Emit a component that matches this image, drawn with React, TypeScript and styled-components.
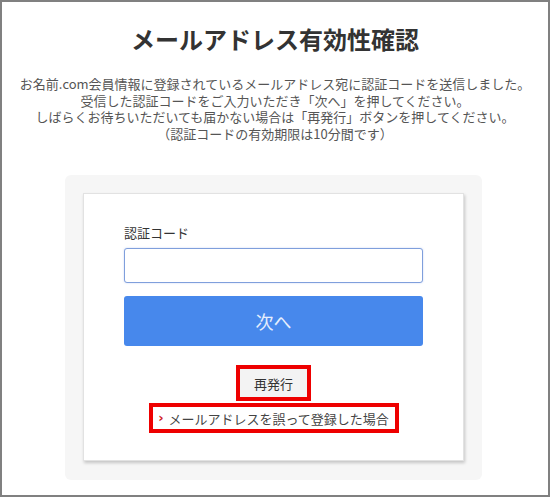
import React from "react";
import styled, { createGlobalStyle } from "styled-components";

const GlobalStyle = createGlobalStyle`
  html, body {
    margin: 0;
    padding: 0;
    background: #fff;
  }
  body {
    font-family: "Noto Sans CJK JP", "Noto Sans", sans-serif;
    color: #333;
  }
`;

const Frame = styled.div`
  box-sizing: border-box;
  width: 550px;
  height: 497px;
  border: 2px solid #808080;
  padding-top: 22px;
  overflow: hidden;
`;

const Title = styled.h1`
  margin: 0;
  font-size: 24px;
  line-height: 30px;
  font-weight: 700;
  text-align: center;
  color: #333;
`;

const Lead = styled.p`
  margin: 22px 0 0;
  font-size: 13px;
  line-height: 16.5px;
  text-align: center;
  color: #555;
`;

const Panel = styled.div`
  box-sizing: border-box;
  width: 417px;
  margin: 33px 0 0 63px;
  padding: 18px 18px 19px;
  background: #f6f6f6;
  border-radius: 6px;
`;

const Card = styled.div`
  box-sizing: border-box;
  height: 268px;
  padding: 30px 40px 0 40px;
  background: #fff;
  border: 1px solid #e2e2e2;
  box-shadow: 1px 2px 3px rgba(0, 0, 0, 0.2);
  display: flex;
  flex-direction: column;
  align-items: stretch;
`;

const Label = styled.label`
  font-size: 13px;
  line-height: 18px;
  color: #333;
`;

const CodeInput = styled.input`
  box-sizing: border-box;
  margin-top: 6px;
  height: 35px;
  width: 100%;
  border: 1px solid #7f9fdc;
  border-radius: 3px;
  box-shadow: 0 0 2px rgba(90, 130, 220, 0.35);
  padding: 0 10px;
  font-size: 14px;
  outline: none;
`;

const NextButton = styled.button`
  margin-top: 13px;
  height: 50px;
  width: 100%;
  border: none;
  border-radius: 3px;
  background: #4788ec;
  color: #e6eefc;
  font-family: inherit;
  font-size: 18px;
  cursor: pointer;
`;

const Actions = styled.div`
  margin-top: 19px;
  display: flex;
  flex-direction: column;
  align-items: center;
  gap: 2px;
`;

const ResendButton = styled.button`
  box-sizing: border-box;
  width: 75px;
  height: 36px;
  border: 4px solid #ee0000;
  background: #f3f3f3;
  color: #333;
  font-family: inherit;
  font-size: 13px;
  padding: 0;
  cursor: pointer;
`;

const HelpLink = styled.a`
  box-sizing: border-box;
  width: 250px;
  height: 30px;
  border: 4px solid #ee0000;
  display: flex;
  align-items: center;
  justify-content: center;
  gap: 5px;
  font-size: 13px;
  color: #444;
  text-decoration: none;
  cursor: pointer;
`;

const Chevron = styled.span`
  color: #d02020;
  font-family: "DejaVu Sans", sans-serif;
  font-size: 13px;
  font-weight: 700;
  line-height: 1;
  margin-top: -2px;
`;

export default function App() {
  return (
    <>
      <GlobalStyle />
      <Frame>
        <Title>メールアドレス有効性確認</Title>
        <Lead>
          お名前.com会員情報に登録されているメールアドレス宛に認証コードを送信しました。
          <br />
          受信した認証コードをご入力いただき「次へ」を押してください。
          <br />
          しばらくお待ちいただいても届かない場合は「再発行」ボタンを押してください。
          <br />
          （認証コードの有効期限は10分間です）
        </Lead>
        <Panel>
          <Card>
            <Label htmlFor="code">認証コード</Label>
            <CodeInput id="code" type="text" />
            <NextButton type="button">次へ</NextButton>
            <Actions>
              <ResendButton type="button">再発行</ResendButton>
              <HelpLink>
                <Chevron>›</Chevron>
                メールアドレスを誤って登録した場合
              </HelpLink>
            </Actions>
          </Card>
        </Panel>
      </Frame>
    </>
  );
}
